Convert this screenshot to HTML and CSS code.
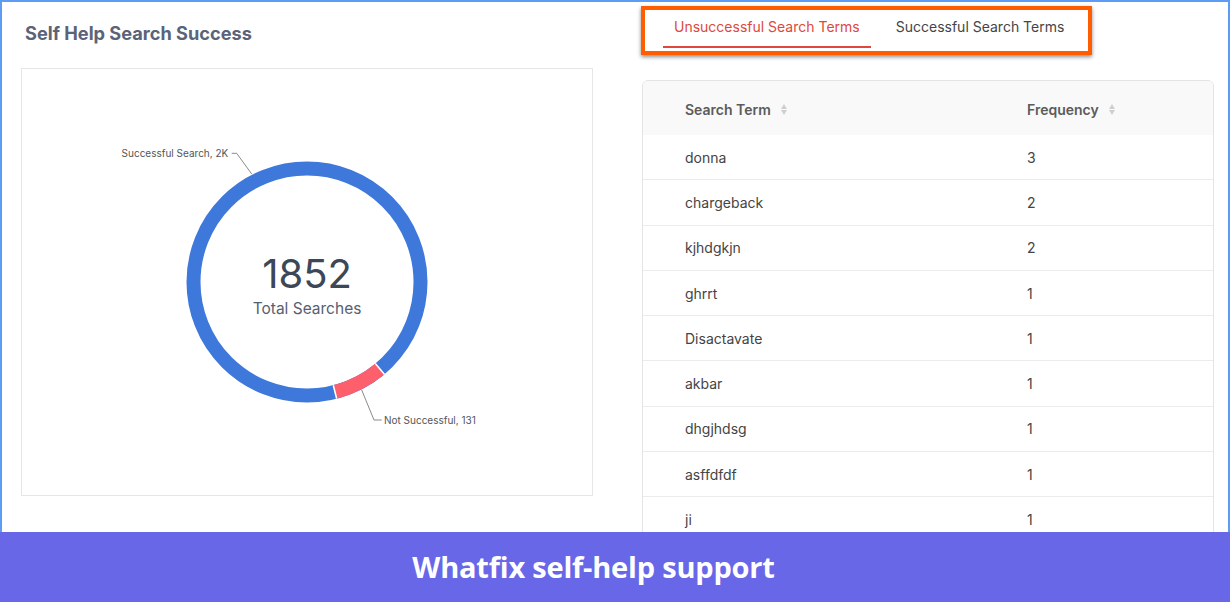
FILE: index.html
```html
<!DOCTYPE html>
<html>
<head>
<meta charset="utf-8">
<link rel="stylesheet" href="styles.css">
</head>
<body>
<div class="frame">
  <section class="left">
    <h1 class="title">Self Help Search Success</h1>
    <div class="chart-card">
      <svg class="donut" viewBox="0 0 570 426" width="570" height="426">
        <circle cx="285" cy="213" r="113.5" fill="none" stroke="#3e78db" stroke-width="14"/>
        <path d="M357.96 299.95 A113.5 113.5 0 0 1 313.0 323.0" fill="none" stroke="#fe5f6c" stroke-width="14"/>
        <line x1="353.3" y1="294.4" x2="362.6" y2="305.5" stroke="#fff" stroke-width="1.5"/>
        <line x1="311.3" y1="316.2" x2="314.7" y2="329.8" stroke="#fff" stroke-width="1.5"/>
        <polyline points="209.7,84.3 214.7,84.3 229.7,105" fill="none" stroke="#8a8a8a" stroke-width="1"/>
        <polyline points="339.7,321 352,351 359.7,351" fill="none" stroke="#8a8a8a" stroke-width="1"/>
        <text class="lbl" x="206.3" y="88" text-anchor="end">Successful Search, 2K</text>
        <text class="lbl" x="362" y="354.5">Not Successful, 131</text>
        <text class="big" x="285" y="219" text-anchor="middle">1852</text>
        <text class="sub" x="285" y="245" text-anchor="middle">Total Searches</text>
      </svg>
    </div>
  </section>
  <section class="right">
    <div class="tabs-box">
      <div class="tab active">Unsuccessful Search Terms</div>
      <div class="tab">Successful Search Terms</div>
    </div>
    <div class="table-card">
      <div class="row head">
        <div class="cell">Search Term <span class="sort"><i class="up"></i><i class="down"></i></span></div>
        <div class="cell">Frequency <span class="sort"><i class="up"></i><i class="down"></i></span></div>
      </div>
      <div class="row"><div class="cell">donna</div><div class="cell">3</div></div>
      <div class="row"><div class="cell">chargeback</div><div class="cell">2</div></div>
      <div class="row"><div class="cell">kjhdgkjn</div><div class="cell">2</div></div>
      <div class="row"><div class="cell">ghrrt</div><div class="cell">1</div></div>
      <div class="row"><div class="cell">Disactavate</div><div class="cell">1</div></div>
      <div class="row"><div class="cell">akbar</div><div class="cell">1</div></div>
      <div class="row"><div class="cell">dhgjhdsg</div><div class="cell">1</div></div>
      <div class="row"><div class="cell">asffdfdf</div><div class="cell">1</div></div>
      <div class="row"><div class="cell">ji</div><div class="cell">1</div></div>
    </div>
  </section>
</div>
<footer class="banner">Whatfix self-help support</footer>
</body>
</html>
```

FILE: styles.css
```css
* { box-sizing: border-box; }
html, body { margin: 0; padding: 0; }
body {
  width: 1230px;
  height: 602px;
  overflow: hidden;
  background: #fff;
  font-family: Inter, "Liberation Sans", sans-serif;
}
.frame {
  height: 532px;
  border: 2px solid #5d9cf5;
  border-bottom: none;
  display: flex;
  overflow: hidden;
}
.left {
  width: 591px;
  padding-left: 19px;
  padding-top: 21px;
  flex: none;
}
.title {
  margin: 0 0 0 4px;
  font-size: 18.2px;
  line-height: 20px;
  font-weight: 700;
  color: #5a6378;
  letter-spacing: 0;
}
.chart-card {
  margin-top: 25px;
  width: 572px;
  height: 428px;
  border: 1px solid #e6e6e6;
}
.donut { display: block; }
.lbl {
  font-family: Inter, "Liberation Sans", sans-serif;
  font-size: 10px;
  fill: #555;
}
.big {
  font-family: Inter, sans-serif;
  font-size: 40px;
  font-weight: 400;
  fill: #3c4757;
}
.sub {
  font-family: Inter, sans-serif;
  font-size: 15.5px;
  fill: #566072;
}
.right {
  width: 572px;
  margin-left: 49px;
  flex: none;
}
.tabs-box {
  margin-top: 4px;
  margin-left: -1px;
  width: 451px;
  height: 49px;
  border: 4px solid #ff5d00;
  box-shadow: 0 2px 4px rgba(0, 0, 0, 0.45);
  display: flex;
  align-items: flex-start;
  padding-left: 18px;
  gap: 14px;
}
.tab {
  padding: 8px 11px 0;
  height: 38px;
  font-size: 14px;
  line-height: 18px;
  color: #454545;
  border-bottom: 2px solid transparent;
  white-space: nowrap;
}
.tab.active {
  color: #e0483c;
  border-bottom-color: #e0483c;
}
.table-card {
  margin-top: 25px;
  border: 1px solid #e4e4e4;
  border-radius: 6px;
  overflow: hidden;
}
.row {
  display: grid;
  grid-template-columns: 384px 1fr;
  height: 45.3px;
  align-items: center;
  border-bottom: 1px solid #ececec;
  font-size: 14px;
  color: #444;
}
.row.head {
  height: 54px;
  padding-top: 3px;
  background: #f9f9f9;
  font-weight: 600;
  color: #5b5b5b;
  border-bottom: none;
}
.cell {
  padding-left: 42px;
  display: flex;
  align-items: center;
}
.row .cell:last-child { padding-left: 0; }
.sort {
  display: inline-flex;
  flex-direction: column;
  gap: 1px;
  margin-left: 10px;
}
.sort i {
  display: block;
  width: 0;
  height: 0;
  border-left: 3.5px solid transparent;
  border-right: 3.5px solid transparent;
}
.sort .up { border-bottom: 5px solid #cfcfcf; }
.sort .down { border-top: 5px solid #cfcfcf; }
.banner {
  height: 70px;
  background: #6867e8;
  color: #fff;
  font-family: "Open Sans", sans-serif;
  font-weight: 700;
  font-size: 29px;
  line-height: 70px;
  padding-right: 43px;
  text-align: center;
  letter-spacing: -0.2px;
}
```
